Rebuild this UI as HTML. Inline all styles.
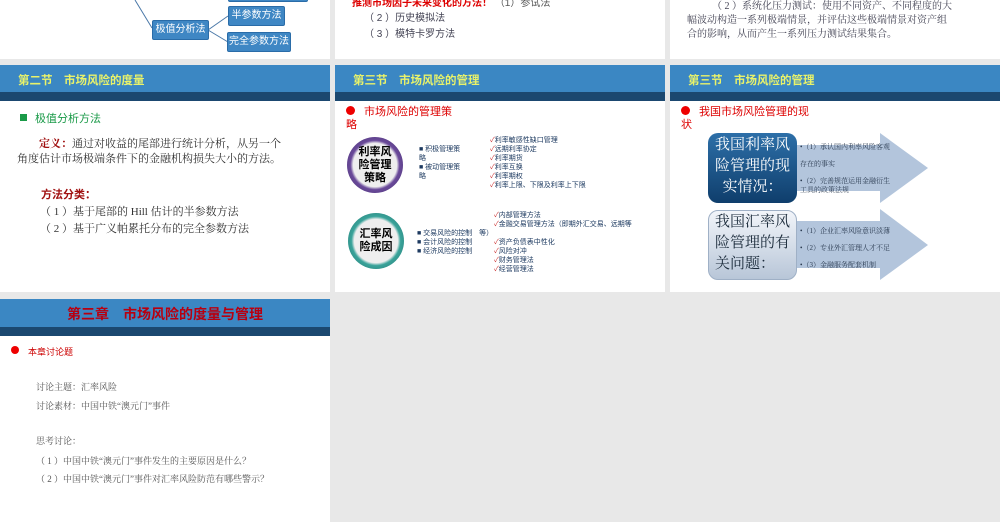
<!DOCTYPE html>
<html><head><meta charset="utf-8"><style>
*{margin:0;padding:0;box-sizing:border-box}
body{width:1000px;height:522px;background:#e8e8e8;position:relative;overflow:hidden;font-family:"Liberation Sans","Noto Sans CJK SC",sans-serif}
.s{position:absolute;background:#fff;overflow:hidden}
.a{position:absolute;white-space:nowrap}
.hb{position:absolute;left:0;right:0;background:#3b87c3}
.hd{position:absolute;left:0;right:0;background:#1b4870}
.ht{position:absolute;color:#e8f26a;font-size:11.5px;font-weight:bold}
.dot{position:absolute;width:9px;height:9px;border-radius:50%;background:#e00}
.sm{font-size:7px;color:#1d3a60;line-height:9px}
.ck{color:#c33}
.srf{font-family:"Liberation Serif","Noto Serif CJK SC",serif}
.box{position:absolute;background:#3f87c4;border:1px solid #2a6ca8;border-radius:2px;color:#fff;font-size:10px;text-align:center;line-height:18px}
</style></head><body>

<!-- Row 1 -->
<div class="s" style="left:0;top:0;width:330px;height:59px">
 <svg class="a" style="left:0;top:0" width="330" height="59"><path d="M135 0 L152 28 M208 30 L228 16 M208 30 L228 42" stroke="#4a78a8" fill="none"/></svg>
 <div class="box" style="left:228px;top:-18px;width:80px;height:20px"></div>
 <div class="box" style="left:152px;top:20px;width:57px;height:20px">极值分析法</div>
 <div class="box" style="left:228px;top:6px;width:57px;height:20px">半参数方法</div>
 <div class="box" style="left:227px;top:32px;width:64px;height:20px">完全参数方法</div>
</div>
<div class="s" style="left:335px;top:0;width:330px;height:59px">
 <div class="a" style="left:17px;top:-6px;font-size:10px;color:#d00;font-weight:bold">推测市场因子未来变化的方法！ <span style="color:#555;font-weight:normal">（1）参试法</span></div>
 <div class="a" style="left:29px;top:9px;font-size:10px;color:#445">（ 2 ）历史模拟法</div>
 <div class="a" style="left:29px;top:25px;font-size:10px;color:#445">（ 3 ）模特卡罗方法</div>
</div>
<div class="s" style="left:670px;top:0;width:330px;height:59px">
 <div class="a srf" style="left:17px;top:0px;font-size:10px;color:#445;line-height:14px">　　　（ 2 ）系统化压力测试：使用不同资产、不同程度的大<br>幅波动构造一系列极端情景，并评估这些极端情景对资产组<br>合的影响，从而产生一系列压力测试结果集合。</div>
</div>

<!-- Row 2 -->
<div class="s" style="left:0;top:65px;width:330px;height:227px">
 <div class="hb" style="top:0;height:27px"></div><div class="hd" style="top:27px;height:9px"></div>
 <div class="ht" style="left:18px;top:7px">第二节　市场风险的度量</div>
 <div class="a" style="left:20px;top:49px;width:7px;height:7px;background:#1a9a48"></div>
 <div class="a" style="left:35px;top:45px;font-size:11px;color:#1a9a48">极值分析方法</div>
 <div class="a srf" style="left:17px;top:72px;font-size:11px;color:#333;line-height:15px">　　<b style="color:#a01010">定义：</b>通过对收益的尾部进行统计分析，从另一个<br>角度估计市场极端条件下的金融机构损失大小的方法。</div>
 <div class="a" style="left:41px;top:121px;font-size:11px;color:#a01010;font-weight:bold">方法分类：</div>
 <div class="a srf" style="left:40px;top:138px;font-size:11px;color:#333">（ 1 ）基于尾部的 Hill 估计的半参数方法</div>
 <div class="a srf" style="left:40px;top:155px;font-size:11px;color:#333">（ 2 ）基于广义帕累托分布的完全参数方法</div>
</div>

<div class="s" style="left:335px;top:65px;width:330px;height:227px">
 <div class="hb" style="top:0;height:27px"></div><div class="hd" style="top:27px;height:9px"></div>
 <div class="ht" style="left:18px;top:7px">第三节　市场风险的管理</div>
 <div class="dot" style="left:11px;top:41px"></div>
 <div class="a" style="left:29px;top:38px;font-size:11px;color:#d00">市场风险的管理策</div>
 <div class="a" style="left:11px;top:51px;font-size:11px;color:#d00">略</div>
 <div class="a" style="left:12px;top:72px;width:56px;height:56px;border-radius:50%;background:radial-gradient(circle,#eee 0 55%,#6a4a9a 62%,#3e2a66 100%)"></div>
 <div class="a" style="left:20px;top:81px;font-size:11px;font-weight:bold;line-height:13px;text-align:center;width:40px">利率风<br>险管理<br>策略</div>
 <div class="a" style="left:13px;top:148px;width:56px;height:56px;border-radius:50%;background:radial-gradient(circle,#eee 0 55%,#3aa39a 62%,#1d6b66 100%)"></div>
 <div class="a" style="left:21px;top:163px;font-size:11px;font-weight:bold;line-height:13px;text-align:center;width:40px">汇率风<br>险成因</div>
 <div class="a sm" style="left:84px;top:80px">■ 积极管理策<br>略<br>■ 被动管理策<br>略</div>
 <div class="a sm" style="left:155px;top:71px"><span class="ck">✓</span>利率敏感性缺口管理<br><span class="ck">✓</span>远期利率协定<br><span class="ck">✓</span>利率期货<br><span class="ck">✓</span>利率互换<br><span class="ck">✓</span>利率期权<br><span class="ck">✓</span>利率上限、下限及利率上下限</div>
 <div class="a sm" style="left:159px;top:146px"><span class="ck">✓</span>内部管理方法<br><span class="ck">✓</span>金融交易管理方法（即期外汇交易、远期等</div>
 <div class="a sm" style="left:82px;top:164px">■ 交易风险的控制　等）<br>■ 会计风险的控制<br>■ 经济风险的控制</div>
 <div class="a sm" style="left:159px;top:173px"><span class="ck">✓</span>资产负债表中性化<br><span class="ck">✓</span>风险对冲<br><span class="ck">✓</span>财务管理法<br><span class="ck">✓</span>经营管理法</div>
</div>

<div class="s" style="left:670px;top:65px;width:330px;height:227px">
 <div class="hb" style="top:0;height:27px"></div><div class="hd" style="top:27px;height:9px"></div>
 <div class="ht" style="left:18px;top:7px">第三节　市场风险的管理</div>
 <div class="dot" style="left:11px;top:41px"></div>
 <div class="a" style="left:29px;top:38px;font-size:11px;color:#d00">我国市场风险管理的现</div>
 <div class="a" style="left:11px;top:51px;font-size:11px;color:#d00">状</div>
 <svg class="a" style="left:0;top:0" width="330" height="227">
  <path d="M125 80 H210 V68 L258 103 L210 138 V126 H125 Z" fill="#b3c5dc"/>
  <path d="M125 156 H210 V144 L258 180 L210 215 V203 H125 Z" fill="#b3c5dc"/>
 </svg>
 <div class="a" style="left:38px;top:68px;width:89px;height:70px;border-radius:10px;background:linear-gradient(#2d6fa8,#0f3e6c)"></div>
 <div class="a srf" style="left:40px;top:70px;width:85px;font-size:15px;line-height:21px;color:#fff;text-align:center">我国利率风<br>险管理的现<br>实情况：</div>
 <div class="a" style="left:38px;top:145px;width:89px;height:70px;border-radius:10px;background:linear-gradient(#f2f5fa,#b8c6d8);border:1px solid #9fb0c6"></div>
 <div class="a srf" style="left:45px;top:147px;width:80px;font-size:15px;line-height:21px;color:#1a2a3a">我国汇率风<br>险管理的有<br>关问题：</div>
 <div class="a srf" style="left:130px;top:78px;font-size:7px;line-height:8.5px;color:#2a3a50">•（1）承认国内利率风险客观<br><br>存在的事实<br><br>•（2）完善规范运用金融衍生<br>工具的政策法规</div>
 <div class="a srf" style="left:130px;top:158px;font-size:7px;line-height:17px;color:#2a3a50">•（1）企业汇率风险意识淡薄<br>•（2）专业外汇管理人才不足<br>•（3）金融服务配套机制</div>
</div>

<!-- Row 3 -->
<div class="s" style="left:0;top:299px;width:330px;height:223px">
 <div class="hb" style="top:0;height:28px"></div><div class="hd" style="top:28px;height:9px"></div>
 <div class="a" style="left:0;width:330px;text-align:center;top:5px;font-size:14px;font-weight:bold;color:#b80010">第三章　市场风险的度量与管理</div>
 <div class="dot" style="left:11px;top:47px;width:8px;height:8px"></div>
 <div class="a" style="left:28px;top:46px;font-size:9px;color:#c00">本章讨论题</div>
 <div class="a srf" style="left:36px;top:81px;font-size:9px;color:#555">讨论主题：汇率风险</div>
 <div class="a srf" style="left:36px;top:100px;font-size:9px;color:#555">讨论素材：中国中铁“澳元门”事件</div>
 <div class="a srf" style="left:36px;top:135px;font-size:9px;color:#555">思考讨论：</div>
 <div class="a srf" style="left:36px;top:155px;font-size:9px;color:#555">（ 1 ）中国中铁“澳元门”事件发生的主要原因是什么？</div>
 <div class="a srf" style="left:36px;top:173px;font-size:9px;color:#555">（ 2 ）中国中铁“澳元门”事件对汇率风险防范有哪些警示？</div>
</div>
</body></html>
